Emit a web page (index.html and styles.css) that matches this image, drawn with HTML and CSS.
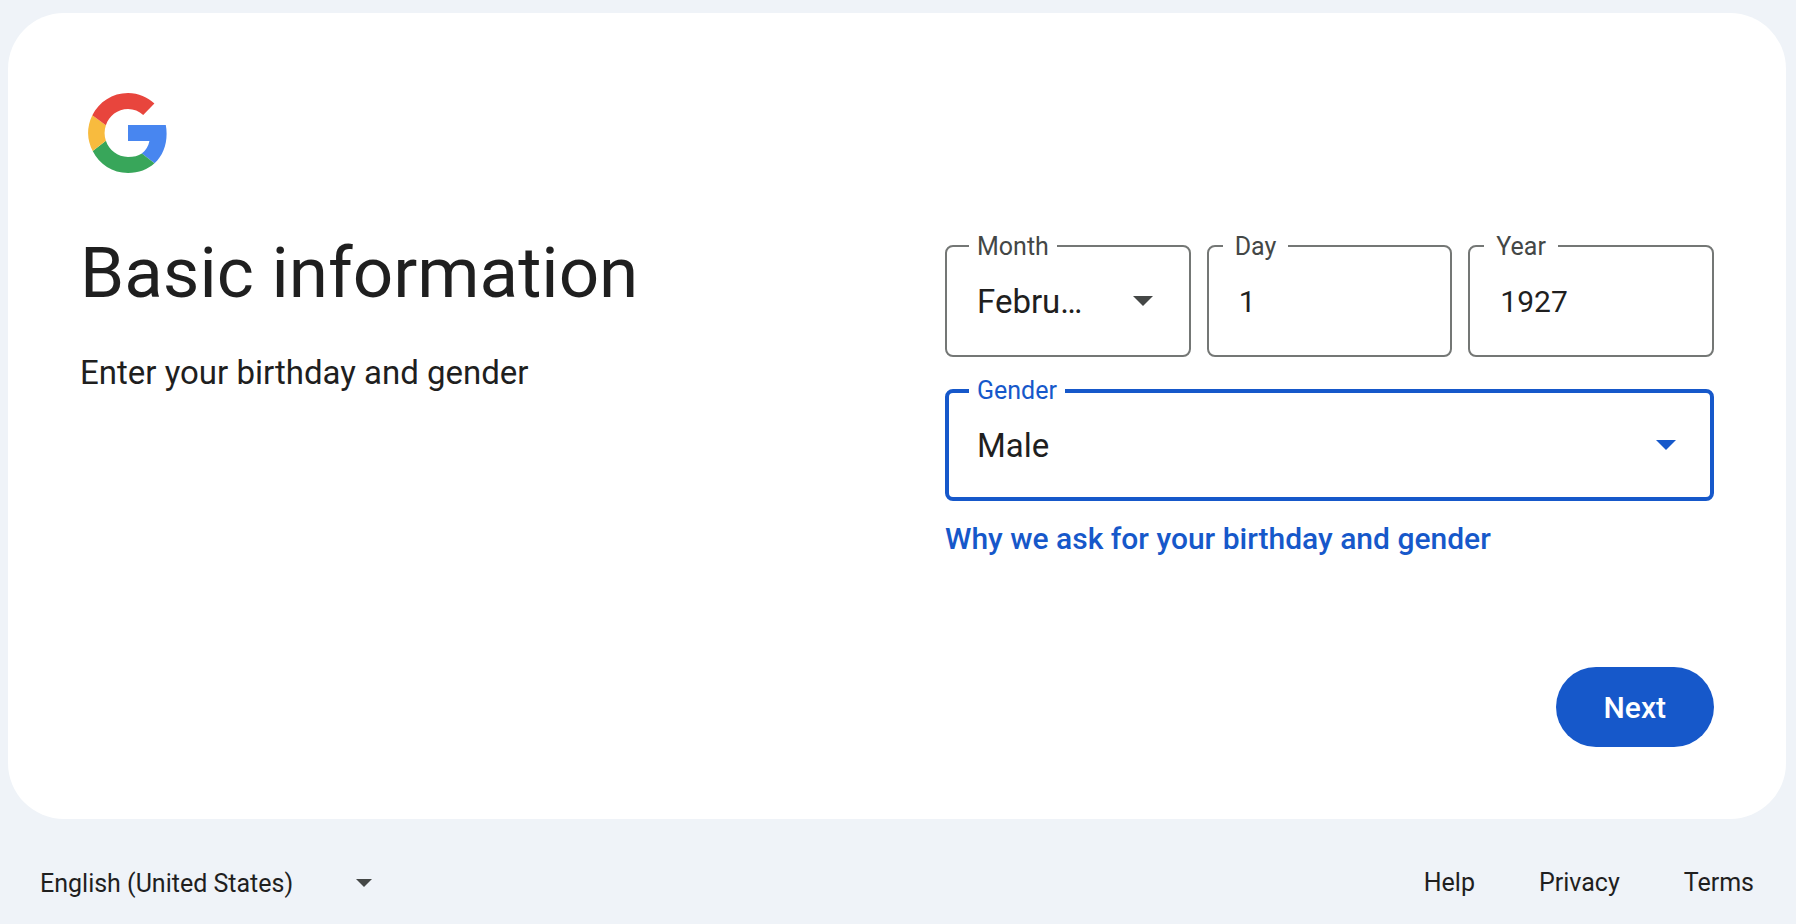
FILE: index.html
```html
<!DOCTYPE html>
<html lang="en">

<head>
    <title>Create your Google Account</title>
    <meta charset="utf-8">
    <meta name="viewport" content="width=device-width, initial-scale=1.0">
    <link rel="stylesheet" href="styles.css">
</head>

<body>

    <main class="card">
        <svg class="logo" viewBox="0 0 48 48" role="img" aria-label="Google">
            <path fill="#4886f0" d="M24 20v8h10.720c-.52 2.600-1.780 4.700-3.820 6.200l6.380 4.950C41.200 35.500 43.300 30.500 43.300 24.400c0-1.500-.13-3-.4-4.400z"/>
            <path fill="#38a65a" d="M24 44c5.400 0 9.930-1.770 13.240-4.840l-6.300-4.940C29.100 35.400 26.900 36 24 36c-5.200 0-9.470-3.400-11.050-8.080l-6.600 5.080C9.600 39.500 16.300 44 24 44z"/>
            <path fill="#f8bb3e" d="M12.950 27.920A12.200 12.200 0 0 1 12.950 20.080L6.150 15.100A20.200 20.200 0 0 0 6.350 33z"/>
            <path fill="#e8453d" d="M24 12c2.930 0 5.530 1.020 7.600 3L37.200 9.300C33.800 6.100 29.300 4 24 4 16.200 4 9.500 8.500 6.150 15.100l6.800 4.980C14.500 15.400 18.800 12 24 12z"/>
        </svg>

        <div class="columns">
            <header>
                <h1>Basic information</h1>
                <p class="intro">Enter your birthday and gender</p>
            </header>

            <form>
                <div class="birthday">
                    <div class="field">
                        <select id="month">
                            <option>January</option>
                            <option selected>February</option>
                            <option>March</option>
                            <option>April</option>
                            <option>May</option>
                            <option>June</option>
                            <option>July</option>
                            <option>August</option>
                            <option>September</option>
                            <option>October</option>
                            <option>November</option>
                            <option>December</option>
                        </select>
                        <label for="month">Month</label>
                        <svg class="arrow" viewBox="0 0 20 10"><path d="M0 0h20L10 10z"/></svg>
                    </div>
                    <div class="field text">
                        <input id="day" type="text" inputmode="numeric" value="1">
                        <label for="day">Day</label>
                    </div>
                    <div class="field text">
                        <input id="year" type="text" inputmode="numeric" value="1927">
                        <label for="year">Year</label>
                    </div>
                </div>

                <div class="field active">
                    <select id="gender">
                        <option>Female</option>
                        <option selected>Male</option>
                        <option>Rather not say</option>
                        <option>Custom</option>
                    </select>
                    <label for="gender">Gender</label>
                    <svg class="arrow" viewBox="0 0 20 10"><path d="M0 0h20L10 10z"/></svg>
                </div>

                <a class="why" href="#">Why we ask for your birthday and gender</a>
            </form>
        </div>

        <button class="next" type="button">Next</button>
    </main>

    <footer>
        <div class="language">
            <select aria-label="Language">
                <option>English (United States)</option>
            </select>
            <svg class="arrow" viewBox="0 0 20 10"><path d="M0 0h20L10 10z"/></svg>
        </div>
        <nav>
            <a href="#">Help</a>
            <a href="#">Privacy</a>
            <a href="#">Terms</a>
        </nav>
    </footer>

</body>

</html>
```
FILE: styles.css
```css
* {
    box-sizing: border-box;
}

body {
    margin: 0;
    min-height: 100vh;
    display: flex;
    flex-direction: column;
    background-color: #eff3f8;
    color: #1f1f1f;
    font-family: Roboto, sans-serif;
}

.card {
    flex: 1;
    display: flex;
    flex-direction: column;
    margin: 13px 10px 0 8px;
    padding: 72px;
    background-color: white;
    border-radius: 56px;
}

.logo {
    width: 96px;
    height: 96px;
}

.columns {
    display: grid;
    grid-template-columns: 1fr 1fr;
    grid-gap: 96px;
}

h1 {
    margin: 48px 0 0;
    font-size: 71px;
    font-weight: 400;
    line-height: 88px;
}

.intro {
    margin: 32px 0 0;
    font-size: 33px;
    line-height: 48px;
}

form {
    padding-top: 64px;
}

.birthday {
    display: grid;
    grid-template-columns: repeat(3, 1fr);
    grid-gap: 16px;
    margin-bottom: 32px;
}

.field {
    position: relative;
}

.field select,
.field input {
    display: block;
    width: 100%;
    height: 112px;
    padding: 0 90px 0 30px;
    border: 2px solid #747775;
    border-radius: 8px;
    background-color: white;
    color: #1f1f1f;
    font-family: inherit;
    font-size: 33px;
    text-overflow: ellipsis;
    appearance: none;
    outline: none;
}

.field input {
    padding-right: 30px;
    font-size: 30px;
}

.field label {
    position: absolute;
    top: -14px;
    left: 24px;
    padding: 0 8px;
    background-color: white;
    color: #444746;
    font-size: 25px;
    line-height: 32px;
}

.text label {
    left: 16px;
    padding: 0 12px;
}

.arrow {
    position: absolute;
    top: 51px;
    right: 38px;
    width: 20px;
    height: 10px;
    fill: #444746;
    pointer-events: none;
}

.active select {
    padding-left: 28px;
    border: 4px solid #1658ca;
}

.active label {
    color: #1658ca;
}

.active .arrow {
    fill: #1658ca;
}

.why {
    display: inline-block;
    margin-top: 18px;
    color: #1658ca;
    font-size: 30px;
    font-weight: 500;
    line-height: 40px;
    text-decoration: none;
}

.next {
    align-self: flex-end;
    margin-top: auto;
    height: 80px;
    padding: 0 48px;
    border: none;
    border-radius: 40px;
    background-color: #1658ca;
    color: white;
    font-family: inherit;
    font-size: 30px;
    font-weight: 500;
}

footer {
    display: flex;
    justify-content: space-between;
    align-items: center;
    padding: 40px 42px 17px 40px;
}

.language {
    position: relative;
}

.language select {
    width: 348px;
    height: 48px;
    padding: 0;
    border: none;
    background-color: transparent;
    color: #1f1f1f;
    font-family: inherit;
    font-size: 25px;
    appearance: none;
}

.language .arrow {
    top: 20px;
    right: 16px;
    width: 16px;
    height: 8px;
}

nav {
    display: flex;
    gap: 64px;
}

nav a {
    color: #1f1f1f;
    font-size: 25px;
    line-height: 48px;
    text-decoration: none;
}

@media only screen and (max-width: 1200px) {
    .columns {
        grid-template-columns: 1fr;
        grid-gap: 0;
    }

    .next {
        margin-top: 64px;
    }
}
```
